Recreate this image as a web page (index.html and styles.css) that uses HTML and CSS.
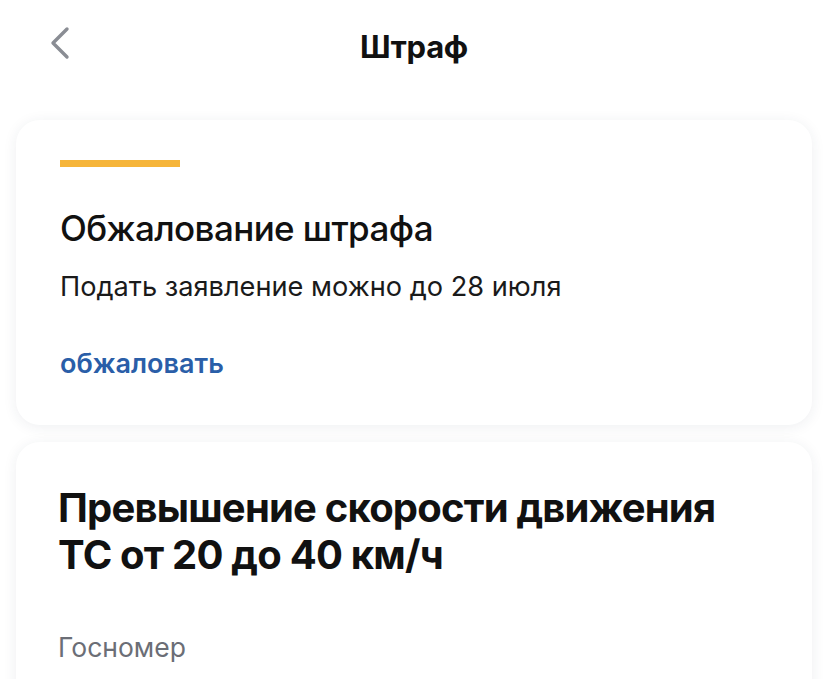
FILE: index.html
```html
<!DOCTYPE html>
<html lang="ru">
<head>
  <meta charset="UTF-8">
  <meta name="viewport" content="width=device-width, initial-scale=1.0">
  <title>Штраф</title>
  <link rel="stylesheet" href="styles.css">
</head>
<body>
  <header class="topbar">
    <button class="back" aria-label="Назад">
      <svg width="22" height="34" viewBox="0 0 22 34">
        <path d="M19 3 L5 17 L19 31" fill="none" stroke="#8a8d94" stroke-width="3.4" stroke-linecap="round" stroke-linejoin="round"/>
      </svg>
    </button>
    <h1>Штраф</h1>
  </header>

  <main class="content">
    <section class="card appeal">
      <div class="accent"></div>
      <h2>Обжалование штрафа</h2>
      <p class="note">Подать заявление можно до 28 июля</p>
      <a class="action" href="#">обжаловать</a>
    </section>

    <section class="card fine">
      <h2>Превышение скорости движения ТС от 20 до 40 км/ч</h2>
      <p class="label">Госномер</p>
    </section>
  </main>
</body>
</html>
```

FILE: styles.css
```css
body {
  margin: 0;
  background: #fff;
  font-family: Inter, Roboto, "Noto Sans", sans-serif;
  color: #111;
  overflow: hidden;
}

.topbar {
  position: relative;
  height: 92px;
  display: flex;
  align-items: center;
  justify-content: center;
}

.back {
  position: absolute;
  left: 48px;
  top: 26px;
  padding: 0;
  border: none;
  background: none;
}

.topbar h1 {
  margin: 0;
  font-size: 31px;
  font-weight: 700;
  letter-spacing: -0.3px;
}

.content {
  padding: 28px 16px 0 16px;
  display: flex;
  flex-direction: column;
  gap: 17px;
}

.card {
  background: #fff;
  border-radius: 24px;
  box-shadow: 0 2px 14px rgba(40, 50, 80, 0.08);
  padding: 0 44px;
}

.appeal {
  padding-top: 40px;
  padding-bottom: 44px;
}

.accent {
  width: 120px;
  height: 7px;
  background: #f6b53a;
}

.appeal h2 {
  margin: 40px 0 0;
  font-size: 35px;
  font-weight: 500;
  letter-spacing: -0.6px;
  line-height: 42px;
}

.note {
  margin: 21px 0 0;
  font-size: 27.2px;
  line-height: 34px;
  color: #1a1a1a;
}

.action {
  display: block;
  margin-top: 43px;
  font-size: 27px;
  line-height: 34px;
  font-weight: 600;
  color: #2a5ea8;
  text-decoration: none;
}

.fine {
  padding-top: 42px;
  padding-left: 42px;
  min-height: 300px;
}

.fine h2 {
  margin: 0;
  max-width: 680px;
  font-size: 40px;
  line-height: 47px;
  font-weight: 700;
  letter-spacing: -0.8px;
}

.label {
  margin: 52px 0 0;
  font-size: 26.5px;
  line-height: 34px;
  color: #6b6e76;
}
```
